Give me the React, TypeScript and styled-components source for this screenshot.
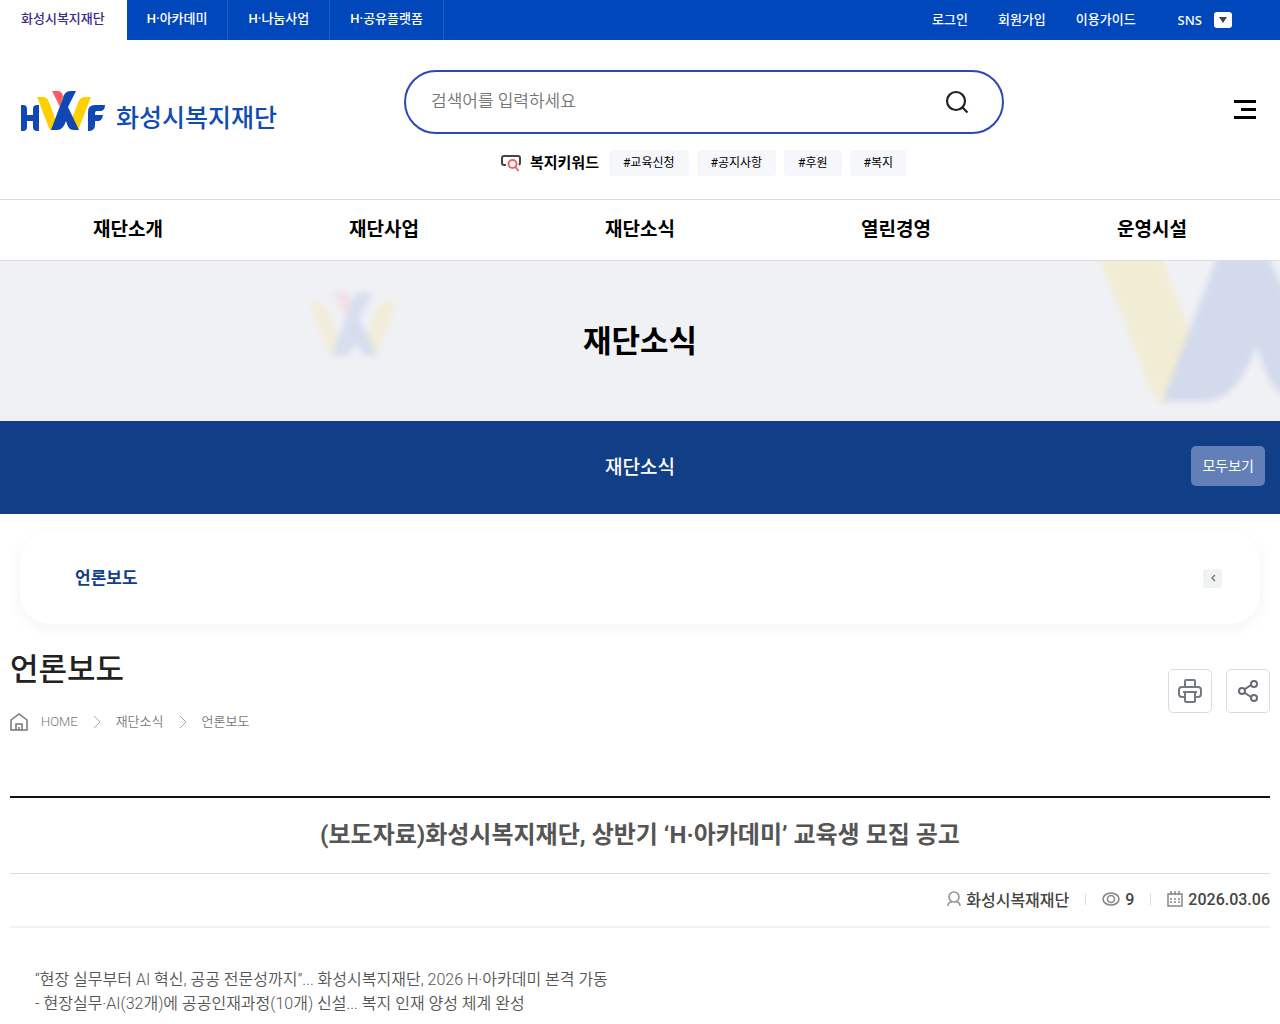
import React from 'react';
import styled, { createGlobalStyle } from 'styled-components';

const Global = createGlobalStyle`
  * { box-sizing: border-box; }
  body { margin: 0; background: #fff; color: #000; font-family: Roboto, "Noto Sans CJK KR", sans-serif; }
  a { color: inherit; text-decoration: none; }
  ul, h1, h2, p { margin: 0; padding: 0; list-style: none; }
  button { font: inherit; color: inherit; border: 0; background: none; padding: 0; cursor: pointer; }
  svg { display: block; flex: none; }
`;

const TopBar = styled.div`
  display: flex;
  justify-content: space-between;
  height: 40px;
  background: #0047bb;
  color: #fff;
  font-size: 13px;
  font-weight: 500;
  line-height: 38px;
`;
const SiteTabs = styled.ul`
  display: flex;
`;
const SiteTab = styled.li<{ $active?: boolean }>`
  background: ${(p) => (p.$active ? '#fff' : 'transparent')};
  color: ${(p) => (p.$active ? '#3a2a8c' : '#fff')};
  border-right: 1px solid ${(p) => (p.$active ? '#fff' : '#1c5cc6')};
  a { display: block; padding: 0 ${(p) => (p.$active ? 21 : 20)}px; }
`;
const UserLinks = styled.ul`
  display: flex;
  gap: 30px;
  padding-right: 48px;
  line-height: 40px;
`;
const SnsButton = styled.button`
  display: flex;
  align-items: center;
  gap: 12px;
  height: 40px;
  margin-left: 12px;
  font-family: "Noto Sans", sans-serif;
`;

const Header = styled.header`
  display: grid;
  grid-template-columns: 32fr 600px 21fr;
  padding: 30px 24px 0 20px;
  height: 159px;
`;
const Logo = styled.a`
  display: flex;
  align-items: flex-end;
  align-self: start;
  gap: 10px;
  margin-top: 20px;
  color: #0f4cb4;
  font-size: 25px;
  font-weight: 500;
  line-height: 26px;
  white-space: nowrap;
`;
const SearchArea = styled.div`
  display: flex;
  flex-direction: column;
  align-items: center;
  gap: 16px;
`;
const SearchForm = styled.form`
  display: flex;
  align-items: center;
  width: 100%;
  height: 64px;
  padding: 0 33px 0 25px;
  border: 2px solid #2a48b8;
  border-radius: 32px;
`;
const SearchInput = styled.input`
  flex: 1;
  min-width: 0;
  border: 0;
  outline: 0;
  padding: 0 0 2px;
  font: 350 17px Roboto, "Noto Sans CJK KR", sans-serif;
  &::placeholder { color: #757575; }
`;
const Keywords = styled.div`
  display: flex;
  align-items: center;
  gap: 8px;
`;
const KeywordTitle = styled.strong`
  display: flex;
  align-items: center;
  gap: 9px;
  margin-right: 2px;
  font-size: 15px;
  line-height: 24px;
`;
const Tag = styled.a`
  padding: 0 14px;
  border-radius: 4px;
  background: #f6f7fa;
  font-size: 12px;
  line-height: 26px;
`;
const MenuButton = styled.button`
  justify-self: end;
  align-self: start;
  margin-top: 30px;
`;

const MainNav = styled.nav`
  display: grid;
  grid-template-columns: repeat(5, 1fr);
  border-top: 1px solid #ddd;
  border-bottom: 1px solid #ddd;
  text-align: center;
  font-size: 19px;
  font-weight: 700;
  line-height: 60px;
`;

const Banner = styled.section`
  position: relative;
  display: flex;
  align-items: center;
  justify-content: center;
  height: 160px;
  padding-top: 2px;
  overflow: hidden;
  background: #f0f1f5;
  h2 { position: relative; font-size: 31px; line-height: 44px; }
`;
const SmallMark = styled.div`
  position: absolute;
  left: 24%;
  top: 28px;
  opacity: 0.11;
  filter: blur(3px);
`;
const LargeMark = styled.div`
  position: absolute;
  right: -139px;
  top: -109px;
  opacity: 0.13;
  filter: blur(3px);
`;

const SectionBar = styled.div`
  display: grid;
  grid-template-columns: 1fr auto 1fr;
  align-items: center;
  height: 93px;
  padding: 0 15px 3px;
  background: #103e87;
  color: #fff;
  font-size: 19px;
  font-weight: 500;
`;
const ViewAll = styled.button`
  grid-column: 3;
  justify-self: end;
  height: 40px;
  padding: 0 11px 2px;
  border-radius: 5px;
  background: #6280b7;
  font-size: 14px;
  font-weight: 400;
`;
const SectionName = styled.a`
  grid-column: 2;
  padding-bottom: 2px;
`;

const SubMenu = styled.nav`
  display: flex;
  align-items: center;
  justify-content: space-between;
  height: 92px;
  margin: 18px 20px 0;
  padding: 0 38px 0 55px;
  border-radius: 30px;
  box-shadow: 0 4px 16px rgba(0, 0, 0, 0.05);
  color: #103e87;
  font-size: 17px;
  font-weight: 700;
  a { padding-bottom: 3px; }
`;
const SubToggle = styled.button`
  display: grid;
  place-items: center;
  width: 19px;
  height: 19px;
  border-radius: 3px;
  background: #eff3f3;
`;

const PageHead = styled.div`
  display: flex;
  justify-content: space-between;
  padding: 24px 10px 0;
  h1 { font-size: 31px; font-weight: 500; line-height: 44px; color: #222; }
`;
const Crumbs = styled.ul`
  display: flex;
  align-items: center;
  gap: 13px;
  margin-top: 20px;
  color: #777;
  font-size: 13px;
  font-weight: 350;
  line-height: 20px;
`;
const Tools = styled.div`
  display: flex;
  gap: 14px;
  padding-top: 21px;
`;
const ToolButton = styled.button`
  display: grid;
  place-items: center;
  width: 44px;
  height: 44px;
  border: 1px solid #d9dbdf;
  border-radius: 5px;
`;

const Article = styled.article`
  margin: 64px 10px 0;
  border-top: 2px solid #111;
`;
const ArticleTitle = styled.h2`
  padding: 19px 0 20px;
  border-bottom: 1px solid #ddd;
  color: #555;
  text-align: center;
  font-size: 24px;
  font-weight: 700;
  line-height: 36px;
`;
const Meta = styled.ul`
  display: flex;
  align-items: center;
  justify-content: flex-end;
  height: 54px;
  padding-bottom: 2px;
  border-bottom: 2px solid #f2f2f2;
  color: #444;
  font-size: 16px;
  font-weight: 500;
`;
const MetaItem = styled.li`
  display: flex;
  align-items: center;
  gap: 5px;
  & + &::before {
    content: "";
    width: 1px;
    height: 12px;
    margin: 0 11px 0 12px;
    background: #ddd;
  }
  & + & { margin-left: 4px; }
`;
const Body = styled.div`
  padding: 40px 25px 10px;
  color: #555;
  font-size: 16px;
  font-weight: 350;
  line-height: 24px;
`;

const MarkShapes = () => (
  <>
    <path fill="#ffd000" d="M17 7h5c4 0 6 2 7 5l7 19-4 9c-1 1-2 0-3-2z" />
    <path fill="#ffd000" d="M71 7h-6c-4 0-6 3-7 6l-7 18 4 8c1 2 3 2 4-1z" />
    <path fill="#fa5b64" d="M32 1h6c3 0 5 3 5 6l-3 10z" />
    <path fill="#0f47b5" d="M56 1h-5c-5 0-7 3-8 7L31 40h6c4 0 7-3 9-9 2 6 3 9 8 9h5L48 17z" />
  </>
);
const Mark = ({ width, height }: { width: number; height: number }) => (
  <svg width={width} height={height} viewBox="16 0 56 42" aria-hidden="true"><MarkShapes /></svg>
);
const LogoMark = () => (
  <svg width="86" height="42" viewBox="0 0 86 42" aria-hidden="true">
    <path fill="#0f47b5" d="M1 15h2q4 0 4 4v6h6v-6q0-4 4-4h2v26h-2q-4 0-4-4v-6H7v6q0 4-4 4H1z" />
    <MarkShapes />
    <path fill="#0f47b5" d="M85 15q0 6-5 6h-3q-2 0-2 2v2h8q-1 6-5 6h-3v4q0 6-7 6V22q0-7 7-7z" />
  </svg>
);
const CrumbArrow = () => (
  <svg width="12" height="14" viewBox="0 0 12 14" fill="none" stroke="#aaa"><path d="m3 1 6 6-6 6" /></svg>
);

export default function App() {
  return (
    <>
      <Global />
      <TopBar>
        <SiteTabs>
          <SiteTab $active><a href="#foundation">화성시복지재단</a></SiteTab>
          <SiteTab><a href="#academy">H·아카데미</a></SiteTab>
          <SiteTab><a href="#sharing">H·나눔사업</a></SiteTab>
          <SiteTab><a href="#platform">H·공유플랫폼</a></SiteTab>
        </SiteTabs>
        <UserLinks>
          <li><a href="#login">로그인</a></li>
          <li><a href="#join">회원가입</a></li>
          <li><a href="#guide">이용가이드</a></li>
          <li>
            <SnsButton type="button">
              SNS
              <svg width="18" height="16" viewBox="0 0 18 16"><rect width="18" height="16" rx="3" fill="#fff" /><path d="M5 5h8l-4 6z" fill="#444" /></svg>
            </SnsButton>
          </li>
        </UserLinks>
      </TopBar>
      <Header>
        <Logo href="#home"><LogoMark />화성시복지재단</Logo>
        <SearchArea>
          <SearchForm role="search">
            <SearchInput type="search" aria-label="검색어" placeholder="검색어를 입력하세요" />
            <button type="button" aria-label="검색">
              <svg width="24" height="24" viewBox="0 0 24 24" fill="none" stroke="#222" strokeWidth="2.2"><circle cx="11" cy="11" r="9" /><path d="m17.500 17.500 5 5" /></svg>
            </button>
          </SearchForm>
          <Keywords>
            <KeywordTitle>
              <svg width="20" height="18" viewBox="0 0 20 18" fill="none" strokeWidth="2"><path stroke="#444" d="M5 11H3q-2 0-2-2V4q0-2 2-2h14q2 0 2 2v5q0 1-1 2" /><circle cx="11.500" cy="10" r="4" stroke="#f0646e" /><path stroke="#f0646e" d="m14.500 13 3 4" /></svg>
              복지키워드
            </KeywordTitle>
            <Tag href="#edu">#교육신청</Tag>
            <Tag href="#notice">#공지사항</Tag>
            <Tag href="#support">#후원</Tag>
            <Tag href="#welfare">#복지</Tag>
          </Keywords>
        </SearchArea>
        <MenuButton type="button" aria-label="전체메뉴">
          <svg width="22" height="20" viewBox="0 0 22 20"><path d="M0 0h22v3H0zM7 8h15v3H7zM0 16h22v3H0z" /></svg>
        </MenuButton>
      </Header>
      <MainNav>
        <a href="#about">재단소개</a>
        <a href="#business">재단사업</a>
        <a href="#news">재단소식</a>
        <a href="#open">열린경영</a>
        <a href="#facility">운영시설</a>
      </MainNav>
      <Banner>
        <SmallMark><Mark width={92} height={72} /></SmallMark>
        <LargeMark><Mark width={350} height={262} /></LargeMark>
        <h2>재단소식</h2>
      </Banner>
      <SectionBar>
        <SectionName href="#news">재단소식</SectionName>
        <ViewAll type="button">모두보기</ViewAll>
      </SectionBar>
      <SubMenu>
        <a href="#press">언론보도</a>
        <SubToggle type="button" aria-label="하위메뉴">
          <svg width="6" height="8" viewBox="0 0 6 8" fill="none" stroke="#777" strokeWidth="1.400"><path d="M5 1 2 4l3 3" /></svg>
        </SubToggle>
      </SubMenu>
      <PageHead>
        <div>
          <h1>언론보도</h1>
          <Crumbs>
            <li><svg width="18" height="18" viewBox="0 0 18 18" fill="none" stroke="#777" strokeWidth="1.500"><path d="M1 7l8-6 8 6v10H1zM6 17v-6h6v6M9 17v-3" /></svg></li>
            <li><a href="#home">HOME</a></li>
            <li><CrumbArrow /></li>
            <li><a href="#news">재단소식</a></li>
            <li><CrumbArrow /></li>
            <li><a href="#press">언론보도</a></li>
          </Crumbs>
        </div>
        <Tools>
          <ToolButton type="button" aria-label="인쇄">
            <svg width="24" height="24" viewBox="0 0 24 24" fill="none" stroke="#737986" strokeWidth="2" strokeLinejoin="round"><path d="M7 8V2q0-1 1-1h8q1 0 1 1v6M6 18H4q-3 0-3-3v-4q0-3 3-3h16q3 0 3 3v4q0 3-3 3h-2M5 13h14M7 13v9q0 1 1 1h8q1 0 1-1v-9" /></svg>
          </ToolButton>
          <ToolButton type="button" aria-label="공유">
            <svg width="22" height="24" viewBox="0 0 22 24" fill="none" stroke="#666b76" strokeWidth="2"><circle cx="5" cy="12" r="3" /><circle cx="17" cy="5" r="3" /><circle cx="17" cy="19" r="3" /><path d="m8 10 6-4M8 14l6 4" /></svg>
          </ToolButton>
        </Tools>
      </PageHead>
      <Article>
        <ArticleTitle>(보도자료)화성시복지재단, 상반기 ‘H·아카데미’ 교육생 모집 공고</ArticleTitle>
        <Meta>
          <MetaItem>
            <svg width="14" height="16" viewBox="0 0 14 16" fill="none" stroke="#999" strokeWidth="1.700"><circle cx="7" cy="6" r="5" /><path d="M1 15q0-4 4-4M13 15q0-4-4-4" /></svg>
            화성시복재재단
          </MetaItem>
          <MetaItem>
            <svg width="18" height="16" viewBox="0 0 18 16" fill="none" stroke="#888" strokeWidth="1.600"><ellipse cx="9" cy="8" rx="8" ry="6" /><circle cx="9" cy="8" r="3.500" /></svg>
            9
          </MetaItem>
          <MetaItem>
            <svg width="16" height="16" viewBox="0 0 16 16" fill="none" stroke="#888" strokeWidth="1.500"><path d="M1 3h14v12H1zM4 0v4M8 0v4M12 0v4" /><path d="M3 8h10M3 11h10" strokeDasharray="2 2" /></svg>
            2026.03.06
          </MetaItem>
        </Meta>
        <Body>
          <p>“현장 실무부터 AI 혁신, 공공 전문성까지”... 화성시복지재단, 2026 H·아카데미 본격 가동</p>
          <p>- 현장실무·AI(32개)에 공공인재과정(10개) 신설... 복지 인재 양성 체계 완성</p>
        </Body>
      </Article>
    </>
  );
}
